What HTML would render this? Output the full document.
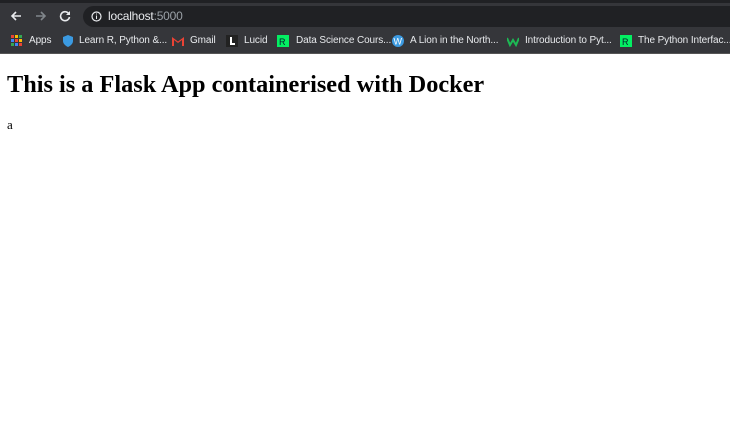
<!DOCTYPE html>
<html><head><style>
*{margin:0;padding:0;box-sizing:border-box}
body{width:730px;height:426px;overflow:hidden;background:#fff;font-family:"Liberation Serif",serif;position:relative}
.top{position:absolute;left:0;top:0;width:730px;height:29px;background:#35363a;border-top:3px solid #202124}
.addr{position:absolute;left:83px;top:3px;width:660px;height:21px;background:#202124;border-radius:11px}
.addr span{position:absolute;left:25px;top:3px;font:12px "Liberation Sans",sans-serif;color:#e8eaed;letter-spacing:-0.2px}
.addr span i{font-style:normal;color:#9aa0a6}
.bm{position:absolute;left:0;top:29px;width:730px;height:25px;background:#35363a;border-bottom:1px solid #555}
.b{position:absolute;top:6px;font:10px "Liberation Sans",sans-serif;color:#e8eaed;white-space:nowrap;letter-spacing:-0.1px}
.ic{position:absolute;top:6px;width:12px;height:12px}
h1{position:absolute;left:7px;top:71px;font-size:24.3px;font-weight:bold;white-space:nowrap;color:#000}
p{position:absolute;left:7px;top:117px;font-size:13px}
</style></head><body>
<div class="top">
<svg style="position:absolute;left:10px;top:7px" width="12" height="12"><path d="M11 6H2M6 2L2 6L6 10" fill="none" stroke="#e8eaed" stroke-width="1.6"/></svg>
<svg style="position:absolute;left:35px;top:7px" width="12" height="12"><path d="M1 6H10M6 2L10 6L6 10" fill="none" stroke="#80868b" stroke-width="1.6"/></svg>
<svg style="position:absolute;left:59px;top:7px" width="12" height="12"><path d="M10 4A4.5 4.5 0 1 0 10.5 7" fill="none" stroke="#e8eaed" stroke-width="1.6"/><path d="M11 1V5H7Z" fill="#e8eaed"/></svg>
<div class="addr"><svg style="position:absolute;left:8px;top:5px" width="11" height="11"><circle cx="5.5" cy="5.5" r="4.5" fill="none" stroke="#e8eaed" stroke-width="1.2"/><rect x="5" y="4.5" width="1" height="3.5" fill="#e8eaed"/><rect x="5" y="2.5" width="1" height="1" fill="#e8eaed"/></svg><span>localhost<i>:5000</i></span></div>
</div>
<div class="bm">
<svg class="ic" style="left:11px"><g fill="#ea4335"><rect x="0" y="0" width="3" height="3"/><rect x="4" y="0" width="3" height="3" fill="#fbbc04"/><rect x="8" y="0" width="3" height="3" fill="#34a853"/><rect x="0" y="4" width="3" height="3" fill="#4285f4"/><rect x="4" y="4" width="3" height="3"/><rect x="8" y="4" width="3" height="3" fill="#fbbc04"/><rect x="0" y="8" width="3" height="3" fill="#34a853"/><rect x="4" y="8" width="3" height="3" fill="#4285f4"/><rect x="8" y="8" width="3" height="3"/></g></svg>
<span class="b" style="left:29px">Apps</span>
<svg class="ic" style="left:62px"><path d="M6 0L11 2V6C11 9 8 11 6 12C4 11 1 9 1 6V2Z" fill="#3b9ae1"/></svg>
<span class="b" style="left:79px">Learn R, Python &amp;...</span>
<svg class="ic" style="left:172px"><path d="M0 2V11H2V5L6 8L10 5V11H12V2L6 6.5Z" fill="#ea4335"/></svg>
<span class="b" style="left:190px">Gmail</span>
<svg class="ic" style="left:226px"><rect width="12" height="12" fill="#222"/><rect x="4" y="2" width="2" height="8" fill="#fff"/><rect x="6" y="8" width="3" height="2" fill="#fff"/></svg>
<span class="b" style="left:244px">Lucid</span>
<svg class="ic" style="left:277px"><rect width="12" height="12" fill="#03ef62"/><text x="2" y="10" font-size="9" font-family="Liberation Sans" fill="#05192d">R</text></svg>
<span class="b" style="left:296px">Data Science Cours...</span>
<svg class="ic" style="left:392px"><circle cx="6" cy="6" r="6" fill="#3b9ae1"/><text x="1.5" y="9.5" font-size="9" font-family="Liberation Sans" fill="#fff">W</text></svg>
<span class="b" style="left:410px">A Lion in the North...</span>
<svg class="ic" style="left:507px"><path d="M0 3L3 10L6 5L9 10L12 3" fill="none" stroke="#1db954" stroke-width="2"/></svg>
<span class="b" style="left:525px">Introduction to Pyt...</span>
<svg class="ic" style="left:620px"><rect width="12" height="12" fill="#03ef62"/><text x="2" y="10" font-size="9" font-family="Liberation Sans" fill="#05192d">R</text></svg>
<span class="b" style="left:638px">The Python Interfac...</span>
</div>
<h1>This is a Flask App containerised with Docker</h1>
<p>a</p>
</body></html>
